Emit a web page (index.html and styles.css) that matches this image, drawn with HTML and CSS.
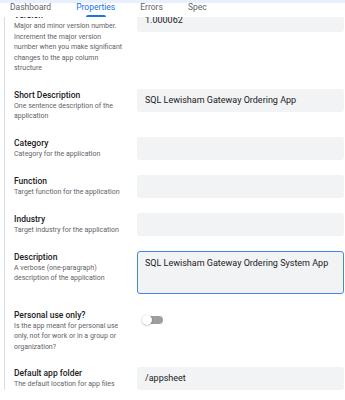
FILE: index.html
```html
<!DOCTYPE html>
<html lang="en">
  <head>
    <meta charset="UTF-8" />
    <meta name="viewport" content="width=device-width, initial-scale=1.0" />
    <title>App Properties</title>
    <link rel="stylesheet" href="styles.css">
  </head>
  <body>
    <div class="strip"></div>
    <div class="tabs">
      <div class="tab">Dashboard</div>
      <div class="tab active">Properties</div>
      <div class="tab">Errors</div>
      <div class="tab">Spec</div>
    </div>
    <div class="panel">
      <div class="row">
        <div class="info">
          <div class="label">Version</div>
          <div class="hint">Major and minor version number. Increment the major version number when you make significant changes to the app column structure</div>
        </div>
        <div class="field">1.000062</div>
      </div>
      <div class="row">
        <div class="info">
          <div class="label">Short Description</div>
          <div class="hint">One sentence description of the application</div>
        </div>
        <div class="field">SQL Lewisham Gateway Ordering App</div>
      </div>
      <div class="row">
        <div class="info">
          <div class="label">Category</div>
          <div class="hint">Category for the application</div>
        </div>
        <div class="field"></div>
      </div>
      <div class="row">
        <div class="info">
          <div class="label">Function</div>
          <div class="hint">Target function for the application</div>
        </div>
        <div class="field"></div>
      </div>
      <div class="row">
        <div class="info">
          <div class="label">Industry</div>
          <div class="hint">Target industry for the application</div>
        </div>
        <div class="field"></div>
      </div>
      <div class="row">
        <div class="info">
          <div class="label">Description</div>
          <div class="hint">A verbose (one-paragraph) description of the application</div>
        </div>
        <div class="field multi">SQL Lewisham Gateway Ordering System App</div>
      </div>
      <div class="row">
        <div class="info">
          <div class="label">Personal use only?</div>
          <div class="hint">Is the app meant for personal use only, not for work or in a group or organization?</div>
        </div>
        <div class="toggle">
          <div class="track"></div>
          <div class="thumb"></div>
        </div>
      </div>
      <div class="row">
        <div class="info">
          <div class="label">Default app folder</div>
          <div class="hint">The default location for app files</div>
        </div>
        <div class="field">/appsheet</div>
      </div>
    </div>
  </body>
</html>
```

FILE: styles.css
```css
body {
  font-family: Roboto, "Liberation Sans", sans-serif;
  background-color: white;
  margin: 0;
  height: 400px;
  overflow: hidden;
}
.strip {
  height: 3px;
  background-color: #e8f0fe;
}
.tabs {
  position: relative;
  z-index: 2;
  display: flex;
  gap: 25px;
  height: 14px;
  padding-left: 10px;
  background-color: white;
}
.tab {
  position: relative;
  font-size: 8.5px;
  line-height: 9px;
  color: #5f6368;
}
.tab.active {
  color: #1a73e8;
}
.tab.active::after {
  content: "";
  position: absolute;
  left: 50%;
  top: 12px;
  width: 20px;
  height: 2px;
  margin-left: -10px;
  background-color: #1a73e8;
  border-radius: 2px 2px 0 0;
}
.panel {
  margin: -8px 1px 0 4px;
  padding-left: 9px;
  border-left: 1px solid #dadce0;
  display: flex;
  flex-direction: column;
  gap: 15px;
}
.row {
  display: grid;
  grid-template-columns: 112px 1fr;
  column-gap: 11px;
  align-items: start;
}
.label {
  font-size: 8.5px;
  font-weight: 500;
  line-height: 12px;
  color: #202124;
}
.hint {
  font-size: 7px;
  line-height: 10.5px;
  color: #5f6368;
}
.field {
  height: 23px;
  box-sizing: border-box;
  padding: 0 8px;
  background-color: #f1f3f4;
  border-radius: 3px;
  font-size: 9px;
  line-height: 23px;
  color: #202124;
  white-space: nowrap;
}
.field.multi {
  height: 43px;
  padding: 6px 7px;
  line-height: 11px;
  border: 1px solid #4285f4;
}
.toggle {
  position: relative;
  width: 21px;
  height: 10px;
  margin: 6px 0 0 5px;
}
.track {
  width: 16px;
  height: 8px;
  margin: 1px 0 0 5px;
  border-radius: 4px;
  background-color: #9e9e9e;
}
.thumb {
  position: absolute;
  left: 0;
  top: 0;
  width: 10px;
  height: 10px;
  border-radius: 50%;
  background-color: white;
  box-shadow: 0 0.5px 2px rgba(0, 0, 0, 0.35);
}
```
